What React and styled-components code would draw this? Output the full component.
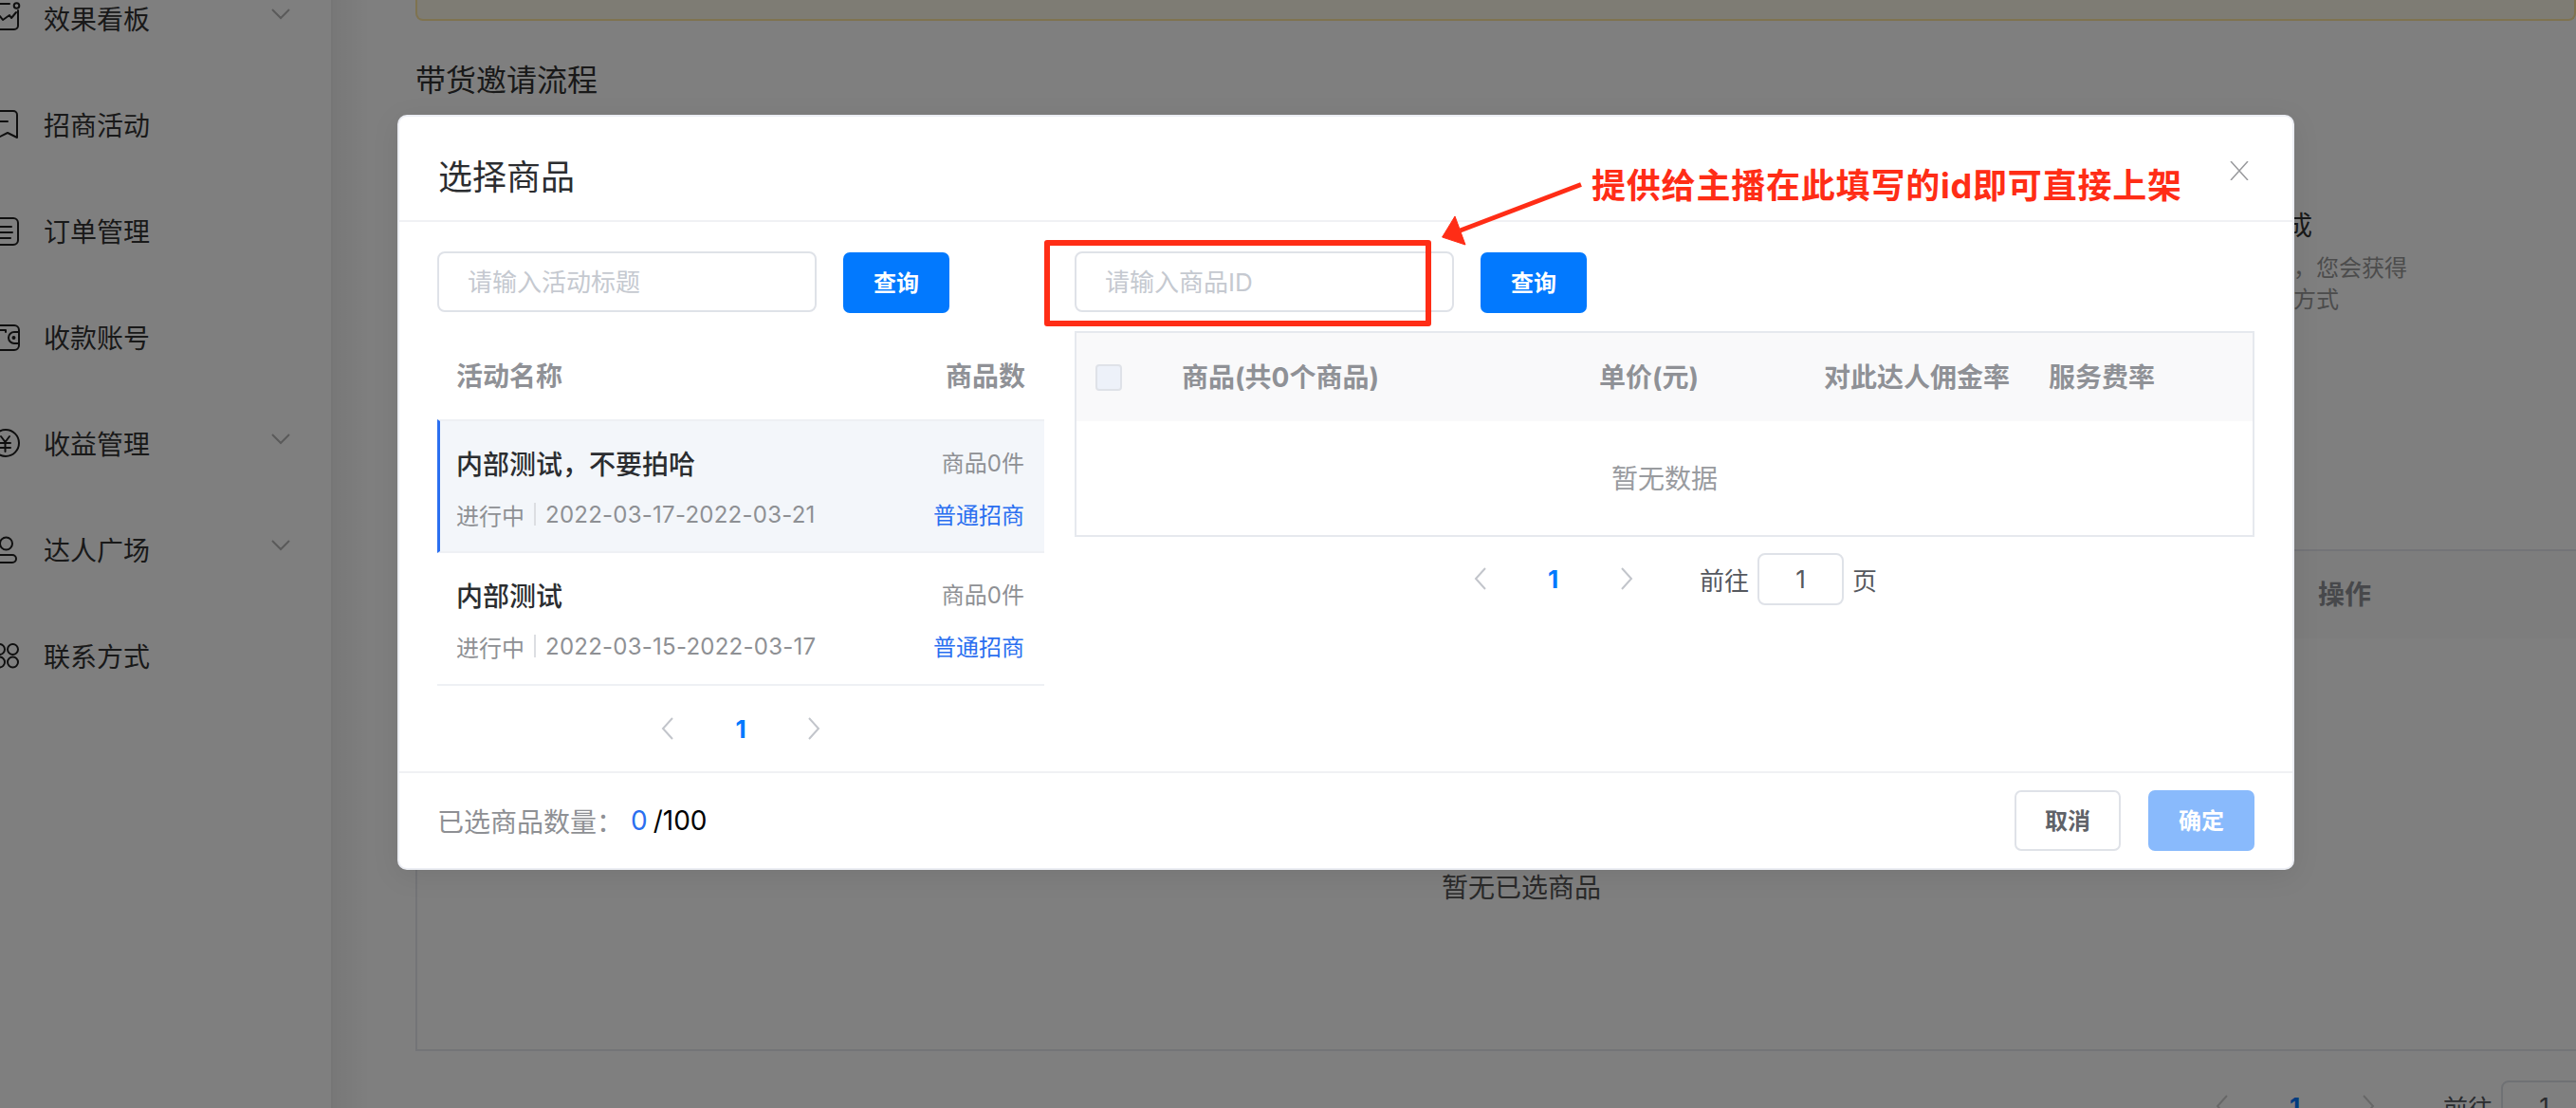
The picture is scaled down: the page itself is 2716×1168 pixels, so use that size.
import styled, { createGlobalStyle } from 'styled-components'

const GlobalStyle = createGlobalStyle`
    * {
        box-sizing: border-box;
    }
    html, body {
        margin: 0;
        padding: 0;
        background: #fff;
        font-family: Inter, "Noto Sans CJK SC", sans-serif;
    }
`;

const Page = styled.div`
    position: relative;
    width: 2716px;
    height: 1168px;
    display: flex;
    overflow: hidden;
    background: #fff;
`;

/* page behind the mask */
const Sidebar = styled.aside`
    width: 351px;
    flex-shrink: 0;
    border-right: 2px solid #ececec;
`;

const NavList = styled.div`
    margin-top: -37px;
    display: flex;
    flex-direction: column;
`;

const NavItem = styled.div`
    height: 112px;
    display: flex;
    align-items: center;
    color: #333;
    font-size: 28px;
    svg.nav-icon {
        width: 22px;
        height: 36px;
        margin-right: 24px;
        flex-shrink: 0;
    }
    svg.nav-arrow {
        width: 20px;
        height: 12px;
        margin-left: 128px;
        margin-top: -9px;
    }
`;

const Main = styled.main`
    flex: 1;
    min-width: 0;
    padding-left: 87px;
    background-image: linear-gradient(to right, rgba(0, 0, 0, 0.06), rgba(0, 0, 0, 0) 40px);
`;

const Notice = styled.div`
    height: 22px;
    background: #fdf8e8;
    border: 2px solid #ffe6a0;
    border-top: none;
    border-radius: 0 0 8px 8px;
`;

const SectionTitle = styled.h2`
    margin: 40px 0 0;
    font-size: 32px;
    line-height: 46px;
    font-weight: 400;
    color: #333;
`;

const StepCol = styled.div`
    margin: 110px 0 0 1860px;
    height: 361px;
    width: 300px;
`;

const StepTitle = styled.div`
    font-size: 28px;
    line-height: 40px;
    color: #333;
    margin-bottom: 8px;
`;

const StepText = styled.div`
    font-size: 24px;
    line-height: 33px;
    color: #999;
`;

const Selected = styled.div`
    width: 2332px;
    height: 529px;
    border: 2px solid #e6e9ee;
`;

const SelectedHead = styled.div`
    height: 92px;
    background: #fafafa;
    display: flex;
    align-items: center;
    padding: 0 0 5px 2004px;
    font-size: 28px;
    font-weight: 700;
    color: #8f9196;
`;

const SelectedEmpty = styled.div`
    padding-top: 243px;
    text-align: center;
    font-size: 28px;
    line-height: 40px;
    color: #555;
`;

/* pagination shared by page and modal */
const PagerRow = styled.div`
    display: flex;
    align-items: center;
    justify-content: ${props => props.$center ? 'center' : 'flex-start'};
    height: ${props => props.$height}px;
    width: ${props => props.$center ? 'auto' : 'max-content'};
    padding-left: ${props => props.$left || 0}px;
`;

const PagerCell = styled.span`
    width: 77px;
    flex-shrink: 0;
    display: flex;
    align-items: center;
    justify-content: center;
    font-size: 26px;
    font-weight: 700;
    color: #0279fe;
    svg {
        width: 14px;
        height: 28px;
    }
`;

const PagerText = styled.span`
    flex-shrink: 0;
    white-space: nowrap;
    font-size: 26px;
    color: #55585e;
    margin-left: ${props => props.$ml || 0}px;
`;

const PagerInput = styled.input`
    width: 91px;
    height: 55px;
    flex-shrink: 0;
    margin: 0 9px;
    border: 2px solid #dfe2e8;
    border-radius: 8px;
    outline: none;
    text-align: center;
    font-family: inherit;
    font-size: 26px;
    color: #55585e;
    background: #fff;
`;

const Mask = styled.div`
    position: absolute;
    inset: 0;
    background: rgba(0, 0, 0, 0.5);
    padding: 121px 0 0 419px;
`;

const Modal = styled.section`
    position: relative;
    width: 2000px;
    height: 796px;
    display: flex;
    flex-direction: column;
    background: #fff;
    border: 2px solid #eceef4;
    border-radius: 10px;
    box-shadow: 0 6px 30px rgba(0, 0, 0, 0.08);
`;

const ModalHead = styled.header`
    height: 111px;
    flex-shrink: 0;
    display: flex;
    justify-content: space-between;
    align-items: flex-start;
    padding: 39px 46px 0 41px;
    border-bottom: 2px solid #f0f1f4;
`;

const ModalTitle = styled.h1`
    margin: 0;
    font-size: 36px;
    line-height: 50px;
    font-weight: 400;
    color: #2b2d30;
`;

const CloseIcon = styled.svg`
    width: 20px;
    height: 20px;
    margin-top: 8px;
`;

const ModalBody = styled.div`
    flex: 1;
    display: flex;
    gap: 32px;
    padding: 31px 40px 0;
`;

const LeftCol = styled.div`
    width: 640px;
    flex-shrink: 0;
`;

const RightCol = styled.div`
    width: 1244px;
    flex-shrink: 0;
`;

const SearchRow = styled.div`
    display: flex;
    align-items: flex-end;
    height: 65px;
    gap: 28px;
`;

const SearchInput = styled.input`
    width: 400px;
    height: 64px;
    margin-bottom: 1px;
    padding: 0 30px;
    border: 2px solid #dfe2e8;
    border-radius: 8px;
    outline: none;
    font-family: inherit;
    font-size: 26px;
    color: #333;
    background: #fff;
    &::placeholder {
        color: #c5c9d0;
    }
`;

const Button = styled.button`
    width: 112px;
    height: 64px;
    border-radius: 7px;
    border: ${props => props.$ghost ? '2px solid #dfe2e8' : 'none'};
    background: ${props => props.$ghost ? '#fff' : props.$muted ? '#89bafc' : '#0279fe'};
    color: ${props => props.$ghost ? '#5f6268' : '#fff'};
    font-family: inherit;
    font-size: 24px;
    font-weight: 700;
    padding: 0 0 3px;
`;

const ListHead = styled.div`
    height: 112px;
    display: flex;
    align-items: center;
    justify-content: space-between;
    padding: 18px 20px 0 20px;
    font-size: 28px;
    font-weight: 700;
    color: #8f9196;
`;

const ActivityRow = styled.div`
    padding: ${props => props.$active ? '26px 21px 21px 17px' : '26px 21px 22px 20px'};
    background: ${props => props.$active ? '#f3f6fa' : '#fff'};
    border-left: ${props => props.$active ? '3px solid #2b6ff0' : 'none'};
    border-top: ${props => props.$active ? '2px solid #eef0f4' : 'none'};
    border-bottom: 2px solid #eef0f4;
`;

const RowLine = styled.div`
    height: 36px;
    display: flex;
    align-items: center;
    justify-content: space-between;
    margin-top: ${props => props.$second ? '18px' : '0'};
`;

const ActivityName = styled.span`
    font-size: 28px;
    font-weight: 500;
    color: #2b2d30;
`;

const Meta = styled.span`
    display: flex;
    align-items: center;
    font-size: 24px;
    color: #8e9094;
`;

const GoodsCount = styled(Meta)`
    margin-bottom: 3px;
`;

const MetaBar = styled.i`
    width: 2px;
    height: 24px;
    margin: 0 10px;
    background: #dcdee2;
`;

const MetaDate = styled.span`
    letter-spacing: 0.25px;
`;

const TypeLink = styled.span`
    margin-bottom: 2px;
    font-size: 24px;
    color: #2b6ff0;
`;

const ProductTable = styled.div`
    margin-top: 19px;
    height: 217px;
    border: 2px solid #e6e9ee;
`;

const TableHead = styled.div`
    height: 93px;
    display: grid;
    grid-template-columns: 91px 440px 237px 237px 1fr;
    align-items: center;
    padding-left: 20px;
    background: #f9f9fa;
`;

const HeadCell = styled.span`
    margin-bottom: 3px;
    font-size: 28px;
    font-weight: 700;
    color: #8f9196;
    white-space: nowrap;
`;

const Checkbox = styled.span`
    display: block;
    width: 28px;
    height: 28px;
    background: #edf1f9;
    border: 2px solid #dfe2e8;
    border-radius: 4px;
`;

const TableEmpty = styled.div`
    height: 120px;
    padding-bottom: 2px;
    display: flex;
    align-items: center;
    justify-content: center;
    font-size: 28px;
    color: #999b9f;
`;

const ModalFoot = styled.footer`
    height: 102px;
    flex-shrink: 0;
    display: flex;
    align-items: center;
    padding: 0 40px;
    border-top: 2px solid #f0f1f4;
    font-size: 28px;
`;

const FootLabel = styled.span`
    color: #8e9094;
`;

const FootCount = styled.span`
    margin-left: 8px;
    color: #2b6ff0;
`;

const FootTotal = styled.span`
    margin-left: 6px;
    color: #000;
`;

const FootActions = styled.div`
    margin-left: auto;
    display: flex;
    gap: 29px;
`;

/* annotation drawn on top of the screenshot */
const RedBox = styled.div`
    position: absolute;
    left: 680px;
    top: 130px;
    width: 408px;
    height: 91px;
    border: 6px solid #ff2d16;
    border-radius: 3px;
`;

const RedArrow = styled.svg`
    position: absolute;
    left: 1094px;
    top: 67px;
    width: 155px;
    height: 72px;
`;

const RedNote = styled.div`
    position: absolute;
    left: 1257px;
    top: 53px;
    font-size: 36px;
    line-height: 40px;
    letter-spacing: 0.8px;
    font-weight: 700;
    color: #ff2d16;
    white-space: nowrap;
`;

const iconProps = { className: 'nav-icon', viewBox: '0 0 22 36', fill: 'none', stroke: '#1f1f1f', strokeWidth: 2, strokeLinecap: 'round', strokeLinejoin: 'round' }

const navItems = [
    {
        label: '效果看板',
        arrow: true,
        icon: <>
            <path d="M-4 3H10M19 10V26a4 4 0 0 1-4 4H-4" />
            <circle cx="17.5" cy="5" r="2.8" />
            <path d="M0 16L3 20L10 15L12 18L17 12" />
        </>,
    },
    {
        label: '招商活动',
        icon: <>
            <path d="M-4 4H14a4 4 0 0 1 4 4V32L8 27L-2 32" />
            <path d="M-2 15H8" />
        </>,
    },
    {
        label: '订单管理',
        icon: <>
            <path d="M-4 5H14a5 5 0 0 1 5 5V28a5 5 0 0 1-5 5H-4" />
            <path d="M-2 14H12M-2 20H13M-2 26H11" />
        </>,
    },
    {
        label: '收款账号',
        icon: <>
            <path d="M-4 6H15a5 5 0 0 1 5 5V27a5 5 0 0 1-5 5H-4" />
            <path d="M-2 11H6V13" />
            <path d="M20 13H15a6 6 0 0 0 0 12H20" />
            <circle cx="14.5" cy="19" r="1" />
        </>,
    },
    {
        label: '收益管理',
        arrow: true,
        icon: <>
            <circle cx="6" cy="18" r="14" />
            <path d="M1 11L5.5 17L10 11M0 18H11M0 23H11M5.5 17V27" />
        </>,
    },
    {
        label: '达人广场',
        arrow: true,
        icon: <>
            <circle cx="6.5" cy="12" r="6.5" />
            <path d="M-4 24H13a4 4 0 0 1 0 8H-4" />
        </>,
    },
    {
        label: '联系方式',
        icon: <>
            <circle cx="-0.5" cy="11.5" r="5.5" />
            <circle cx="13.5" cy="11.5" r="5.5" />
            <circle cx="-0.5" cy="25" r="5.5" />
            <circle cx="13.5" cy="25" r="5.5" />
        </>,
    },
]

const activities = [
    { name: '内部测试，不要拍哈', date: '2022-03-17-2022-03-21', active: true },
    { name: '内部测试', date: '2022-03-15-2022-03-17' },
]

const Chevron = ({ right, color = '#c2c5cb' }) => (
    <svg viewBox="0 0 14 28" fill="none" stroke={color} strokeWidth="2">
        <path d={right ? 'M2 3L12 14L2 25' : 'M12 3L2 14L12 25'} />
    </svg>
)

const Pager = ({ color }) => (
    <>
        <PagerCell><Chevron color={color} /></PagerCell>
        <PagerCell>1</PagerCell>
        <PagerCell><Chevron right color={color} /></PagerCell>
    </>
)

const App = () => {
    return (
        <Page>
            <GlobalStyle />
            <Sidebar>
                <NavList>
                    {navItems.map(item => (
                        <NavItem key={item.label}>
                            <svg {...iconProps}>{item.icon}</svg>
                            {item.label}
                            {item.arrow && (
                                <svg className="nav-arrow" viewBox="0 0 20 12" fill="none" stroke="#b4b4b4" strokeWidth="2">
                                    <path d="M1 1L10 10L19 1" />
                                </svg>
                            )}
                        </NavItem>
                    ))}
                </NavList>
            </Sidebar>
            <Main>
                <Notice />
                <SectionTitle>带货邀请流程</SectionTitle>
                <StepCol>
                    <StepTitle>带货已完成</StepTitle>
                    <StepText>商品售出后，您会获得</StepText>
                    <StepText>佣金结算的方式</StepText>
                </StepCol>
                <Selected>
                    <SelectedHead>操作</SelectedHead>
                    <SelectedEmpty>暂无已选商品</SelectedEmpty>
                </Selected>
                <PagerRow $height={116} $left={1866}>
                    <Pager color="#cfcfcf" />
                    <PagerText $ml={41}>前往</PagerText>
                    <PagerInput defaultValue="1" readOnly />
                </PagerRow>
            </Main>
            <Mask>
                <Modal>
                    <ModalHead>
                        <ModalTitle>选择商品</ModalTitle>
                        <CloseIcon viewBox="0 0 20 20" fill="none" stroke="#98999c" strokeWidth="1.5">
                            <path d="M1 0L19 20M19 0L1 20" />
                        </CloseIcon>
                    </ModalHead>
                    <ModalBody>
                        <LeftCol>
                            <SearchRow>
                                <SearchInput placeholder="请输入活动标题" />
                                <Button>查询</Button>
                            </SearchRow>
                            <ListHead>
                                <span>活动名称</span>
                                <span>商品数</span>
                            </ListHead>
                            {activities.map(row => (
                                <ActivityRow key={row.date} $active={row.active}>
                                    <RowLine>
                                        <ActivityName>{row.name}</ActivityName>
                                        <GoodsCount>商品0件</GoodsCount>
                                    </RowLine>
                                    <RowLine $second>
                                        <Meta>进行中<MetaBar /><MetaDate>{row.date}</MetaDate></Meta>
                                        <TypeLink>普通招商</TypeLink>
                                    </RowLine>
                                </ActivityRow>
                            ))}
                            <PagerRow $height={90} $center>
                                <Pager />
                            </PagerRow>
                        </LeftCol>
                        <RightCol>
                            <SearchRow>
                                <SearchInput placeholder="请输入商品ID" />
                                <Button>查询</Button>
                            </SearchRow>
                            <ProductTable>
                                <TableHead>
                                    <Checkbox />
                                    <HeadCell>商品(共0个商品)</HeadCell>
                                    <HeadCell>单价(元)</HeadCell>
                                    <HeadCell>对此达人佣金率</HeadCell>
                                    <HeadCell>服务费率</HeadCell>
                                </TableHead>
                                <TableEmpty>暂无数据</TableEmpty>
                            </ProductTable>
                            <PagerRow $height={88} $left={389}>
                                <Pager />
                                <PagerText $ml={39}>前往</PagerText>
                                <PagerInput defaultValue="1" readOnly />
                                <PagerText>页</PagerText>
                            </PagerRow>
                        </RightCol>
                    </ModalBody>
                    <ModalFoot>
                        <FootLabel>已选商品数量：</FootLabel>
                        <FootCount>0</FootCount>
                        <FootTotal>/100</FootTotal>
                        <FootActions>
                            <Button $ghost>取消</Button>
                            <Button $muted>确定</Button>
                        </FootActions>
                    </ModalFoot>
                    <RedBox />
                    <RedArrow viewBox="0 0 155 72" fill="#ff2d16" stroke="#ff2d16">
                        <path d="M152 4.5L24.5 53" strokeWidth="5" />
                        <polygon points="5.6,60 19,38 30,68" strokeWidth="1" />
                    </RedArrow>
                    <RedNote>提供给主播在此填写的id即可直接上架</RedNote>
                </Modal>
            </Mask>
        </Page>
    )
}

export default App
